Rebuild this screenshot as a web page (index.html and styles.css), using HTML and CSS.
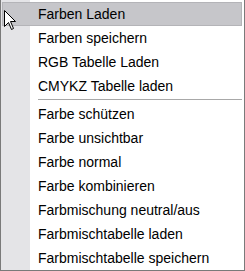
FILE: index.html
```html
<!DOCTYPE html>
<html lang="de">

<head>
  <meta charset="utf-8" />
  <title>Farben Menü</title>
  <link rel="stylesheet" href="styles.css">
</head>

<body>
  <div class="menu">
    <ul class="menu-list">
      <li class="menu-item active">Farben Laden</li>
      <li class="menu-item">Farben speichern</li>
      <li class="menu-item">RGB Tabelle Laden</li>
      <li class="menu-item">CMYKZ Tabelle laden</li>
      <li class="menu-sep"></li>
      <li class="menu-item">Farbe schützen</li>
      <li class="menu-item">Farbe unsichtbar</li>
      <li class="menu-item">Farbe normal</li>
      <li class="menu-item">Farbe kombinieren</li>
      <li class="menu-item">Farbmischung neutral/aus</li>
      <li class="menu-item">Farbmischtabelle laden</li>
      <li class="menu-item">Farbmischtabelle speichern</li>
    </ul>

    <!-- Mouse pointer -->
    <svg class="cursor" width="13" height="21" viewBox="0 0 13 21">
      <path d="M0.5 0.5 L0.5 16.5 L4.5 12.5 L7.5 19.5 L9.5 18.5 L6.5 11.5 L11.5 11.5 Z" fill="#fff" stroke="#000" stroke-width="1" />
    </svg>
  </div>
</body>

</html>
```

FILE: styles.css
```css
/* Reset */
* {
  margin: 0;
  padding: 0;
  box-sizing: border-box;
}

body {
  font-family: Tahoma, "Liberation Sans", sans-serif;
  background-color: #ffffff;
  color: #000000;
}

/* Popup menu */
.menu {
  position: relative;
  width: 245px;
  height: 271px;
  border: 1px solid #7a7a7a;
  border-top: none;
  padding: 2px 2px 0 1px;
  background: linear-gradient(to right, #e4e4e7 0, #e4e4e7 29px, #ffffff 29px);
}

.menu-list {
  list-style: none;
}

.menu-item {
  height: 24px;
  line-height: 22px;
  padding-left: 35px;
  font-size: 14px;
  white-space: nowrap;
  border: 1px solid transparent;
}

.menu-item.active {
  background-color: #c6c6ca;
  border-color: #b4b4b8;
}

.menu-sep {
  margin-top: 1px;
  height: 3px;
  margin-left: 36px;
  border-top: 1px solid #a8a8a8;
}

.cursor {
  position: absolute;
  left: 3px;
  top: 10px;
}
```
